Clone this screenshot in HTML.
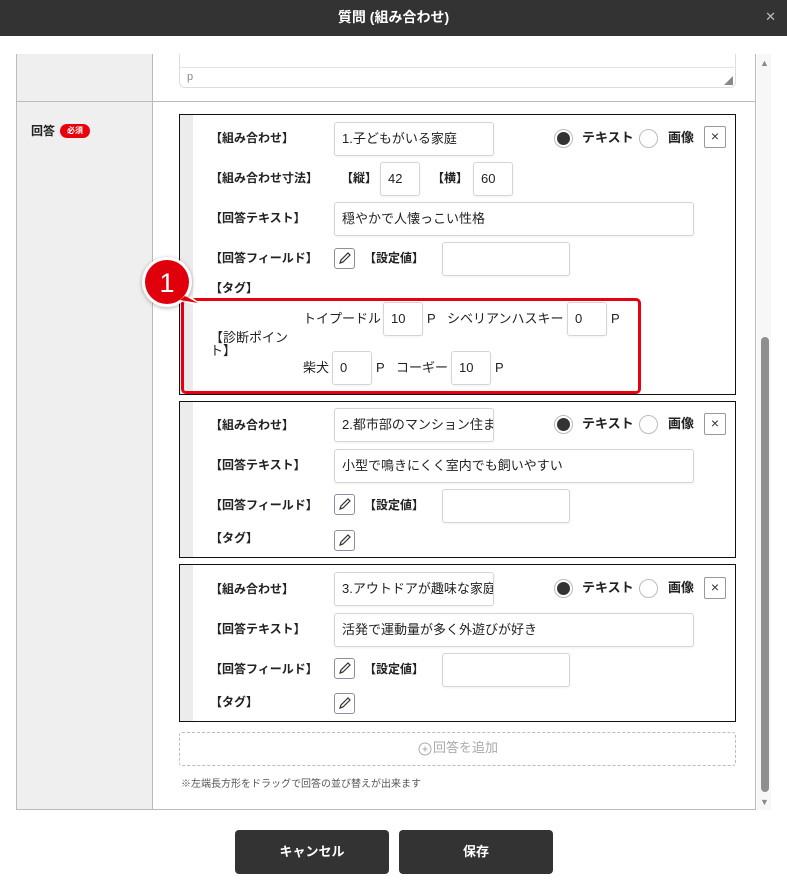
<!DOCTYPE html>
<html><head><meta charset="utf-8"><style>
*{box-sizing:border-box;margin:0;padding:0}
body{width:787px;height:889px;position:relative;background:#fff;font-family:"Liberation Sans","Noto Sans CJK JP",sans-serif;font-size:13px;color:#222;overflow:hidden}
.a{position:absolute}
.hd{left:0;top:0;width:787px;height:36px;background:#333;color:#fff;font-weight:bold;font-size:14px;text-align:center;line-height:34px}
.lb{position:absolute;font-size:12px;font-weight:bold;line-height:14px;white-space:nowrap}
.in{position:absolute;border:1px solid #d5d5d5;border-radius:3px;background:#fff;font-size:13px;line-height:31px;padding-left:7px;white-space:nowrap;overflow:hidden;box-shadow:0 1px 2px rgba(0,0,0,.06)}
.card{position:absolute;left:179px;width:557px;border:1px solid #111;background:#fff}
.grip{position:absolute;left:0;top:0;bottom:0;width:13px;background:#ececec}
.rad{position:absolute;width:19px;height:19px;border:1px solid #bbb;border-radius:50%;background:#fff}
.rad.on::after{content:"";position:absolute;left:2px;top:2px;width:13px;height:13px;border-radius:50%;background:#333}
.x{position:absolute;width:22px;height:22px;border:1px solid #999;border-radius:2px;font-size:14px;text-align:center;line-height:19px;color:#333}
.pen{position:absolute;width:21px;height:21px;border:1px solid #8a8fa0;border-radius:3px}
.t{position:absolute;font-size:13px;white-space:nowrap;line-height:16px}
.btn{position:absolute;top:830px;height:44px;width:154px;background:#333;color:#fff;border-radius:4px;font-weight:bold;font-size:13px;text-align:center;line-height:44px}
</style></head><body>
<div class="a hd">質問 (組み合わせ)</div>
<div class="a" style="right:11px;top:9px;color:#bbb;font-size:13px">✕</div>
<div class="a" style="left:16px;top:54px;width:137px;height:756px;background:#efefef;border-left:1px solid #bbb;border-right:1px solid #bbb"></div>
<div class="a" style="left:755px;top:54px;width:1px;height:756px;background:#bbb"></div>
<div class="a" style="left:16px;top:101px;width:740px;height:1px;background:#bbb"></div>
<div class="a" style="left:16px;top:809px;width:740px;height:1px;background:#bbb"></div>
<div class="a" style="left:179px;top:54px;width:557px;height:34px;border:1px solid #ddd;border-top:none;border-radius:0 0 6px 6px"></div>
<div class="a" style="left:179px;top:67px;width:557px;height:1px;background:#e3e3e3"></div>
<div class="a" style="left:187px;top:71px;font-size:11px;color:#888">p</div>
<div class="a" style="left:724px;top:74px;font-size:9px;color:#888">◢</div>
<div class="a" style="left:757px;top:54px;width:14px;height:756px;background:#f7f7f7"></div>
<div class="a" style="left:760px;top:58px;font-size:9px;color:#888">▲</div>
<div class="a" style="left:760px;top:797px;font-size:9px;color:#888">▼</div>
<div class="a" style="left:761px;top:337px;width:8px;height:455px;border-radius:4px;background:#8f8f8f"></div>
<div class="lb" style="left:31px;top:124px">回答</div>
<div class="a" style="left:60px;top:124px;width:30px;height:14px;border-radius:7px;background:#e8000b;color:#fff;font-size:8px;font-weight:bold;text-align:center;line-height:14px">必須</div>

<div class="card" style="top:114px;height:281px"><div class="grip"></div></div>
<div class="lb" style="left:210px;top:131px">【組み合わせ】</div>
<div class="in" style="left:334px;top:122px;width:160px;height:34px">1.子どもがいる家庭</div>
<div class="rad on" style="left:554px;top:129px"></div><div class="lb" style="left:582px;top:131px;font-size:13px">テキスト</div>
<div class="rad" style="left:639px;top:129px"></div><div class="lb" style="left:668px;top:131px;font-size:13px">画像</div>
<div class="x" style="left:704px;top:126px">×</div>
<div class="lb" style="left:210px;top:171px">【組み合わせ寸法】</div>
<div class="lb" style="left:341px;top:171px">【縦】</div>
<div class="in" style="left:380px;top:162px;width:40px;height:34px">42</div>
<div class="lb" style="left:432px;top:171px">【横】</div>
<div class="in" style="left:473px;top:162px;width:40px;height:34px">60</div>
<div class="lb" style="left:210px;top:211px">【回答テキスト】</div>
<div class="in" style="left:334px;top:202px;width:360px;height:34px">穏やかで人懐っこい性格</div>
<div class="lb" style="left:210px;top:251px">【回答フィールド】</div>
<div class="pen" style="left:334px;top:248px"><svg width="19" height="19"><path d="M5 14 L6 11 L13 4 L15 6 L8 13 Z" fill="none" stroke="#333" stroke-width="1.2"/></svg></div>
<div class="lb" style="left:364px;top:251px">【設定値】</div>
<div class="in" style="left:442px;top:242px;width:128px;height:34px"></div>
<div class="lb" style="left:210px;top:281px">【タグ】</div>
<div class="a" style="left:181px;top:298px;width:460px;height:96px;border:3px solid #e60012;border-radius:5px"></div>
<div class="t" style="left:210px;top:330px">【診断ポイン</div><div class="t" style="left:210px;top:343px">ト】</div>
<div class="t" style="left:303px;top:311px">トイプードル</div>
<div class="in" style="left:383px;top:302px;width:40px;height:34px">10</div>
<div class="t" style="left:427px;top:311px">P</div>
<div class="t" style="left:447px;top:311px">シベリアンハスキー</div>
<div class="in" style="left:567px;top:302px;width:40px;height:34px">0</div>
<div class="t" style="left:611px;top:311px">P</div>
<div class="t" style="left:303px;top:360px">柴犬</div>
<div class="in" style="left:332px;top:351px;width:40px;height:34px">0</div>
<div class="t" style="left:376px;top:360px">P</div>
<div class="t" style="left:396px;top:360px">コーギー</div>
<div class="in" style="left:451px;top:351px;width:40px;height:34px">10</div>
<div class="t" style="left:495px;top:360px">P</div>
<svg class="a" style="left:138px;top:252px" width="70" height="70"><path d="M52 44 L66 54 L44 50 Z" fill="#fff"/><circle cx="29" cy="30" r="25" fill="#fff" style="filter:drop-shadow(0 1px 2px rgba(0,0,0,.3))"/><circle cx="29" cy="30" r="22" fill="#e0000b"/><path d="M47 44 L60 51 L42 48 Z" fill="#e0000b"/><text x="29" y="40" fill="#fff" font-size="27" font-family="Liberation Sans" text-anchor="middle">1</text></svg>

<div class="card" style="top:401px;height:157px"><div class="grip"></div></div>
<div class="lb" style="left:210px;top:418px">【組み合わせ】</div>
<div class="in" style="left:334px;top:408px;width:160px;height:34px">2.都市部のマンション住まい</div>
<div class="rad on" style="left:554px;top:415px"></div><div class="lb" style="left:582px;top:417px;font-size:13px">テキスト</div>
<div class="rad" style="left:639px;top:415px"></div><div class="lb" style="left:668px;top:417px;font-size:13px">画像</div>
<div class="x" style="left:704px;top:413px">×</div>
<div class="lb" style="left:210px;top:458px">【回答テキスト】</div>
<div class="in" style="left:334px;top:449px;width:360px;height:34px">小型で鳴きにくく室内でも飼いやすい</div>
<div class="lb" style="left:210px;top:498px">【回答フィールド】</div>
<div class="pen" style="left:334px;top:494px"><svg width="19" height="19"><path d="M5 14 L6 11 L13 4 L15 6 L8 13 Z" fill="none" stroke="#333" stroke-width="1.2"/></svg></div>
<div class="lb" style="left:364px;top:498px">【設定値】</div>
<div class="in" style="left:442px;top:489px;width:128px;height:34px"></div>
<div class="lb" style="left:210px;top:531px">【タグ】</div>
<div class="pen" style="left:334px;top:530px"><svg width="19" height="19"><path d="M5 14 L6 11 L13 4 L15 6 L8 13 Z" fill="none" stroke="#333" stroke-width="1.2"/></svg></div>

<div class="card" style="top:564px;height:158px"><div class="grip"></div></div>
<div class="lb" style="left:210px;top:582px">【組み合わせ】</div>
<div class="in" style="left:334px;top:572px;width:160px;height:34px">3.アウトドアが趣味な家庭</div>
<div class="rad on" style="left:554px;top:579px"></div><div class="lb" style="left:582px;top:581px;font-size:13px">テキスト</div>
<div class="rad" style="left:639px;top:579px"></div><div class="lb" style="left:668px;top:581px;font-size:13px">画像</div>
<div class="x" style="left:704px;top:577px">×</div>
<div class="lb" style="left:210px;top:622px">【回答テキスト】</div>
<div class="in" style="left:334px;top:613px;width:360px;height:34px">活発で運動量が多く外遊びが好き</div>
<div class="lb" style="left:210px;top:662px">【回答フィールド】</div>
<div class="pen" style="left:334px;top:658px"><svg width="19" height="19"><path d="M5 14 L6 11 L13 4 L15 6 L8 13 Z" fill="none" stroke="#333" stroke-width="1.2"/></svg></div>
<div class="lb" style="left:364px;top:662px">【設定値】</div>
<div class="in" style="left:442px;top:653px;width:128px;height:34px"></div>
<div class="lb" style="left:210px;top:695px">【タグ】</div>
<div class="pen" style="left:334px;top:693px"><svg width="19" height="19"><path d="M5 14 L6 11 L13 4 L15 6 L8 13 Z" fill="none" stroke="#333" stroke-width="1.2"/></svg></div>

<div class="a" style="left:179px;top:732px;width:557px;height:34px;border:1px dashed #bbb;border-radius:3px"></div>
<svg class="a" style="left:418px;top:742px" width="14" height="14"><circle cx="7" cy="7" r="6" fill="none" stroke="#aaa"/><path d="M7 4.5V9.5M4.5 7H9.5" stroke="#aaa"/></svg>
<div class="a" style="left:433px;top:740px;color:#aaa;font-size:13px;line-height:16px">回答を追加</div>
<div class="a" style="left:181px;top:775px;font-size:10px;color:#555">※左端長方形をドラッグで回答の並び替えが出来ます</div>

<div class="btn" style="left:235px">キャンセル</div>
<div class="btn" style="left:399px">保存</div>
</body></html>
